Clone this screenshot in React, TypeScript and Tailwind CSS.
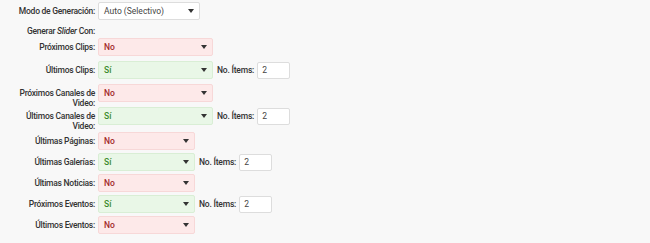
import React from "react";

type Row = { label: React.ReactNode; yes: boolean; items?: boolean };

const groupA: Row[] = [
  { label: "Próximos Clips:", yes: false },
  { label: "Últimos Clips:", yes: true, items: true },
  { label: <>Próximos Canales de<br />Video:</>, yes: false },
  { label: <>Últimos Canales de<br />Video:</>, yes: true, items: true },
];

const groupB: Row[] = [
  { label: "Últimas Páginas:", yes: false },
  { label: "Últimas Galerías:", yes: true, items: true },
  { label: "Últimas Noticias:", yes: false },
  { label: "Próximos Eventos:", yes: true, items: true },
  { label: "Últimos Eventos:", yes: false },
];

function Caret() {
  return (
    <svg width="6" height="4" viewBox="0 0 6 4" className="shrink-0">
      <path d="M0 0h6L3 4z" fill="#333" />
    </svg>
  );
}

function Select({ yes, wide }: { yes: boolean; wide: boolean }) {
  const color = yes
    ? "bg-[#e9f7e7] border-[#d9eed5] text-[#3b8a2e]"
    : "bg-[#fde9e9] border-[#f7d8d8] text-[#a22a2a]";
  return (
    <div className={`flex h-[18px] shrink-0 items-center justify-between rounded-[2px] border pl-[5px] pr-[5px] font-medium ${color} ${wide ? "w-[115px]" : "w-[97px]"}`}>
      <span>{yes ? "Sí" : "No"}</span>
      <Caret />
    </div>
  );
}

function Items() {
  return (
    <div className="ml-[4px] flex h-[18px] items-center">
      <span className="whitespace-nowrap font-medium tracking-[-0.2px] text-[#333]">No. Ítems:</span>
      <div className="ml-[3px] flex h-[17px] w-[33px] items-center rounded-[2px] border border-[#ddd] bg-white pl-[4px] text-[#444]">2</div>
    </div>
  );
}

function FormRow({ row, wide }: { row: Row; wide: boolean }) {
  return (
    <div className="flex h-[18px] items-start">
      <div className="w-[84px] shrink-0 whitespace-nowrap pr-[3px] pt-[4px] text-right font-medium leading-[10px] tracking-[-0.25px] text-[#333]">{row.label}</div>
      <Select yes={row.yes} wide={wide} />
      {row.items && <Items />}
    </div>
  );
}

export default function App() {
  return (
    <div className="min-h-[243px] w-[650px] bg-[#f8f8f8] pl-[14px] pt-[2px] text-[8.5px] text-[#333]" style={{ fontFamily: "Roboto, sans-serif" }}>
      <div className="flex h-[18px] items-center">
        <div className="w-[84px] whitespace-nowrap pr-[3px] text-right font-medium tracking-[-0.25px]">Modo de Generación:</div>
        <div className="flex h-[18px] w-[102px] items-center justify-between rounded-[2px] border border-[#ddd] bg-white pl-[5px] pr-[5px] text-[#444]">
          <span>Auto (Selectivo)</span>
          <Caret />
        </div>
      </div>
      <div className="mt-[6px] w-[84px] whitespace-nowrap pr-[3px] text-right font-medium leading-[10px] tracking-[-0.25px]">
        Generar <i>Slider</i> Con:
      </div>
      <div className="mt-[2px] flex flex-col gap-[5px]">
        {groupA.map((r, i) => (
          <FormRow key={i} row={r} wide />
        ))}
      </div>
      <div className="mt-[7px] flex flex-col gap-[3px]">
        {groupB.map((r, i) => (
          <FormRow key={i} row={r} wide={false} />
        ))}
      </div>
    </div>
  );
}
